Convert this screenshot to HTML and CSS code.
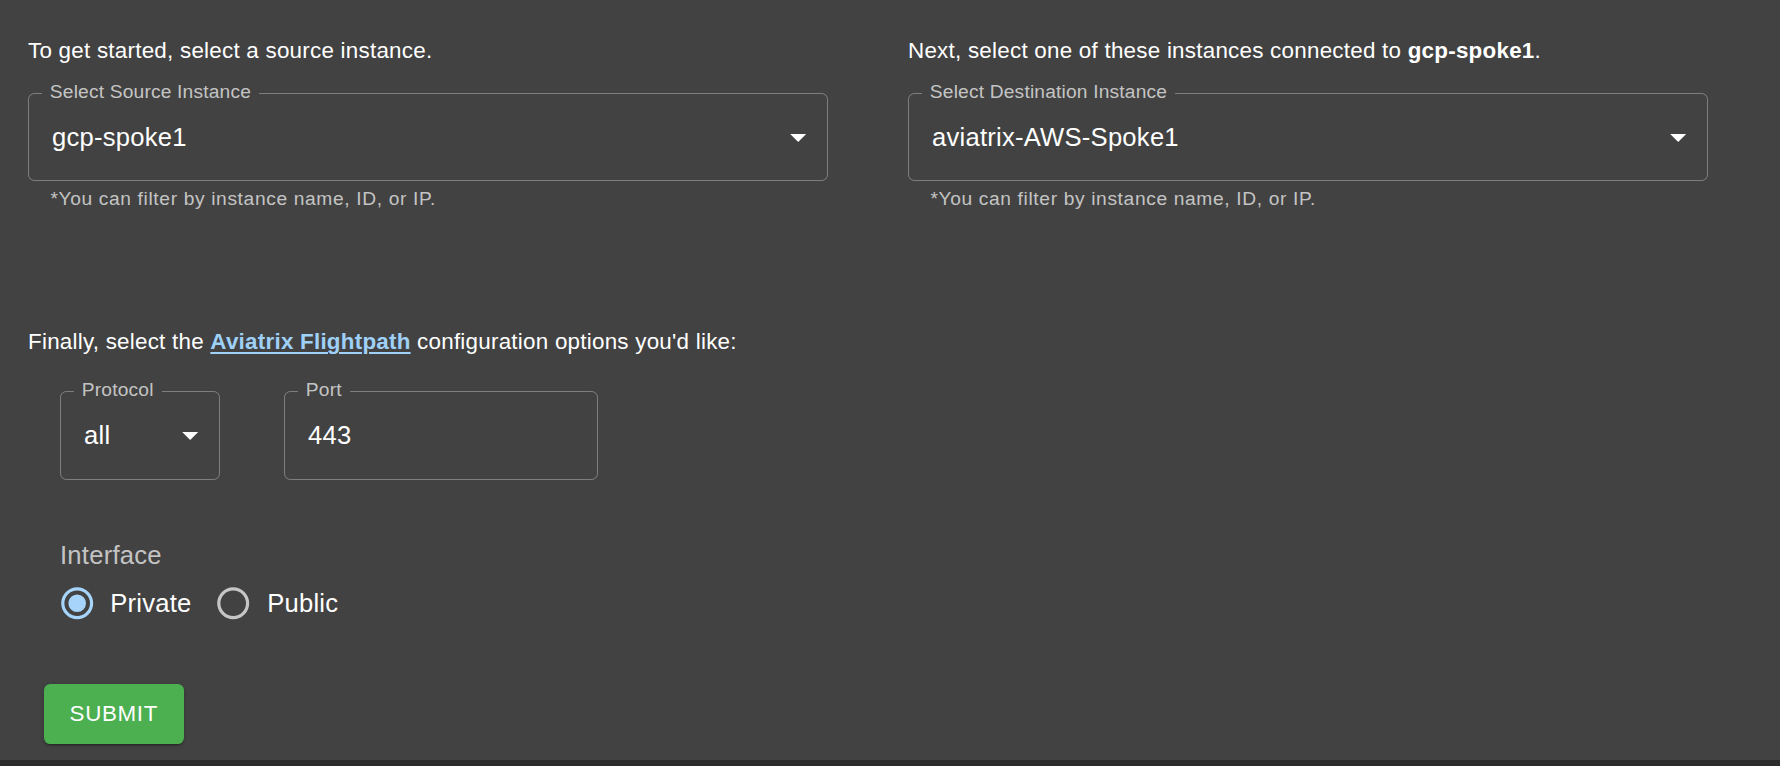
FILE: index.html
```html
<!DOCTYPE html>
<html lang="en">
<head>
<meta charset="utf-8">
<title>Flightpath</title>
<link rel="stylesheet" href="styles.css">
</head>
<body>
<main class="card">
  <div class="top-grid">
    <section class="col">
      <p class="intro">To get started, select a source instance.</p>
      <fieldset class="field">
        <legend>Select Source Instance</legend>
        <div class="field-row">
          <span class="value">gcp-spoke1</span>
          <svg class="arrow" viewBox="0 0 24 24"><path d="M7 10l5 5 5-5z"/></svg>
        </div>
      </fieldset>
      <p class="helper">*You can filter by instance name, ID, or IP.</p>
    </section>
    <section class="col">
      <p class="intro">Next, select one of these instances connected to <b>gcp-spoke1</b>.</p>
      <fieldset class="field">
        <legend>Select Destination Instance</legend>
        <div class="field-row">
          <span class="value">aviatrix-AWS-Spoke1</span>
          <svg class="arrow" viewBox="0 0 24 24"><path d="M7 10l5 5 5-5z"/></svg>
        </div>
      </fieldset>
      <p class="helper">*You can filter by instance name, ID, or IP.</p>
    </section>
  </div>

  <p class="intro intro-final">Finally, select the <a class="link" href="#">Aviatrix Flightpath</a> configuration options you'd like:</p>

  <div class="options">
    <fieldset class="field field-protocol">
      <legend>Protocol</legend>
      <div class="field-row">
        <span class="value">all</span>
        <svg class="arrow" viewBox="0 0 24 24"><path d="M7 10l5 5 5-5z"/></svg>
      </div>
    </fieldset>
    <fieldset class="field field-port">
      <legend>Port</legend>
      <div class="field-row">
        <span class="value">443</span>
      </div>
    </fieldset>
  </div>

  <div class="interface">
    <div class="iface-label">Interface</div>
    <div class="radios">
      <label class="radio">
        <span class="radio-icon checked">
          <svg viewBox="0 0 24 24"><circle cx="12" cy="12" r="9" fill="none" stroke-width="2"/><circle class="dot" cx="12" cy="12" r="5"/></svg>
        </span>
        <span class="radio-text">Private</span>
      </label>
      <label class="radio">
        <span class="radio-icon">
          <svg viewBox="0 0 24 24"><circle cx="12" cy="12" r="9" fill="none" stroke-width="2"/></svg>
        </span>
        <span class="radio-text">Public</span>
      </label>
    </div>
  </div>

  <button class="submit" type="button">Submit</button>
</main>
</body>
</html>
```

FILE: styles.css
```css
* { box-sizing: border-box; }

html, body {
  margin: 0;
  padding: 0;
  background: #2c2c2c;
  font-family: "Liberation Sans", Arial, Helvetica, sans-serif;
  color: #ffffff;
}

.card {
  background: #424242;
  padding: 35px 0 16px 28px;
  box-shadow: 0 2px 2px rgba(0,0,0,0.35), 0 1px 5px rgba(0,0,0,0.25);
}

.top-grid {
  display: grid;
  grid-template-columns: 800px 800px;
  column-gap: 80px;
}

.col {
  display: flex;
  flex-direction: column;
}

.intro {
  margin: 0;
  font-size: 22.4px;
  line-height: 32px;
  letter-spacing: 0.24px;
  color: #ffffff;
}

.intro b { font-weight: 700; }

.link {
  color: #9fd0f8;
  font-weight: 700;
  text-decoration: underline;
  text-decoration-thickness: 1.6px;
  text-underline-offset: 3px;
}

.field {
  margin: 15px 0 0 0;
  padding: 0;
  border: 1.6px solid rgba(255,255,255,0.32);
  border-radius: 6.4px;
  min-width: 0;
}

.field legend {
  margin-left: 12.8px;
  padding: 0 8px 2px;
  font-size: 19.2px;
  line-height: 20px;
  letter-spacing: 0.18px;
  color: rgba(255,255,255,0.7);
}

.field-row {
  height: 76.4px;
  padding: 0 9.6px 10.4px 23px;
  display: flex;
  align-items: center;
}

.value {
  font-size: 25.6px;
  line-height: 36.8px;
  letter-spacing: 0.24px;
  color: #ffffff;
  white-space: nowrap;
}

.arrow {
  width: 38.4px;
  height: 38.4px;
  margin-left: auto;
  fill: #ffffff;
  flex: none;
}

.helper {
  margin: 6px 0 0 22.4px;
  font-size: 19.2px;
  line-height: 24px;
  letter-spacing: 0.64px;
  color: rgba(255,255,255,0.7);
}

.intro-final {
  margin-top: 115px;
}

.options {
  display: flex;
  gap: 64px;
  margin-left: 32px;
}

.options .field { margin-top: 22px; }

.field-protocol { width: 160px; }
.field-port { width: 314px; }

.interface {
  margin-left: 32px;
  margin-top: 60px;
}

.iface-label {
  font-size: 25.6px;
  line-height: 30px;
  letter-spacing: 0.24px;
  color: rgba(255,255,255,0.7);
}

.radios {
  display: flex;
  align-items: center;
}

.radio {
  display: flex;
  align-items: center;
  margin-left: -16px;
  margin-right: 26px;
}

.radio + .radio { margin-left: -17.6px; }

.radio-icon {
  width: 67.2px;
  height: 67.2px;
  padding: 14.4px;
  display: flex;
}

.radio-icon svg {
  width: 38.4px;
  height: 38.4px;
}

.radio-icon circle {
  stroke: rgba(255,255,255,0.7);
}

.radio-icon.checked circle { stroke: #a6d4fa; }
.radio-icon .dot { fill: #a6d4fa; stroke: none; }

.radio-text {
  font-size: 25.6px;
  line-height: 36px;
  letter-spacing: 0.24px;
  color: #ffffff;
  margin-left: -1px;
}

.radio + .radio .radio-text { margin-left: 0; }

.submit {
  display: block;
  margin: 47px 0 0 16px;
  padding: 9.6px 25.6px;
  height: 60px;
  border: 0;
  border-radius: 6.4px;
  background: #4caf50;
  color: #ffffff;
  font-family: "Liberation Sans", Arial, Helvetica, sans-serif;
  font-size: 22.4px;
  line-height: 39.2px;
  letter-spacing: 0.64px;
  text-transform: uppercase;
  box-shadow: 0 3px 1px -2px rgba(0,0,0,0.2), 0 2px 2px 0 rgba(0,0,0,0.14), 0 1px 5px 0 rgba(0,0,0,0.12);
}
```
